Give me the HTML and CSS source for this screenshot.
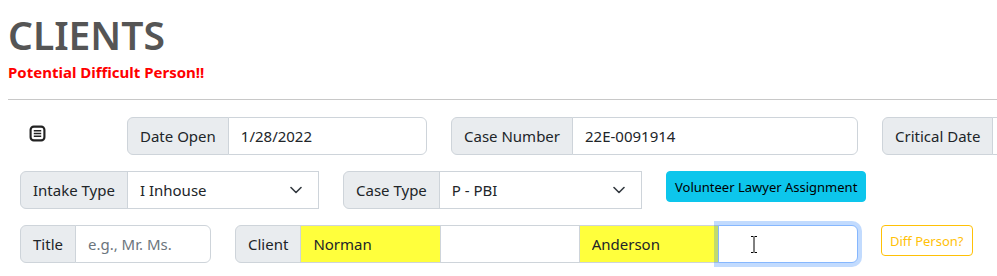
FILE: index.html
```html
<!DOCTYPE html>
<html lang="en">
<head>
    <meta charset="UTF-8">
    <meta name="viewport" content="width=device-width, initial-scale=1.0">
    <title>Clients</title>
    <link rel="stylesheet" href="styles.css">
</head>
<body>
    <div class="page">
        <h1 class="page-title">CLIENTS</h1>
        <div class="difficult-flag">Potential Difficult Person!!</div>
        <hr class="divider">

        <div class="case-form">
            <div class="form-row">
                <div class="icon-cell">
                    <svg class="notes-icon" width="17" height="17" viewBox="0 0 16 16">
                        <rect x="1.5" y="1.5" width="13" height="13" rx="3" fill="none" stroke="#222" stroke-width="2"/>
                        <path d="M4.5 5.5h7M4.5 8h7M4.5 10.5h7" stroke="#222" stroke-width="1.4"/>
                    </svg>
                </div>
                <div class="input-group w-300">
                    <span class="addon">Date Open</span>
                    <input class="field" type="text" value="1/28/2022">
                </div>
                <div class="input-group w-407">
                    <span class="addon">Case Number</span>
                    <input class="field" type="text" value="22E-0091914">
                </div>
                <div class="input-group w-300">
                    <span class="addon">Critical Date</span>
                    <input class="field" type="text" value="">
                </div>
            </div>

            <div class="form-row">
                <div class="input-group w-299">
                    <span class="addon">Intake Type</span>
                    <div class="field select">
                        <span>I Inhouse</span>
                        <svg width="12" height="8" viewBox="0 0 12 8"><path d="M1 1.5l5 5 5-5" fill="none" stroke="#343a40" stroke-width="1.6" stroke-linecap="round" stroke-linejoin="round"/></svg>
                    </div>
                </div>
                <div class="input-group w-299">
                    <span class="addon">Case Type</span>
                    <div class="field select">
                        <span>P - PBI</span>
                        <svg width="12" height="8" viewBox="0 0 12 8"><path d="M1 1.5l5 5 5-5" fill="none" stroke="#343a40" stroke-width="1.6" stroke-linecap="round" stroke-linejoin="round"/></svg>
                    </div>
                </div>
                <button class="btn btn-info" type="button">Volunteer Lawyer Assignment</button>
            </div>

            <div class="form-row">
                <div class="input-group w-191">
                    <span class="addon">Title</span>
                    <input class="field" type="text" placeholder="e.g., Mr. Ms.">
                </div>
                <div class="input-group w-623">
                    <span class="addon">Client</span>
                    <input class="field flagged" type="text" value="Norman">
                    <input class="field" type="text" value="">
                    <input class="field flagged" type="text" value="Anderson">
                    <div class="field focused">
                        <svg class="ibeam" width="8" height="17" viewBox="0 0 8 17">
                            <path d="M1 0.5h2.5M4.5 0.5h2.5M4 1v15M1 16.5h2.5M4.5 16.5h2.5" stroke="#000" stroke-width="1"/>
                        </svg>
                    </div>
                </div>
                <button class="btn btn-outline-warning" type="button">Diff Person?</button>
            </div>
        </div>
    </div>
</body>
</html>
```

FILE: styles.css
```css
html, body {
    margin: 0;
    padding: 0;
    background-color: #fff;
    overflow: hidden;
}
body {
    font-family: "Noto Sans", "Open Sans", sans-serif;
    color: #212529;
}
.page {
    padding: 8px;
}
.page-title {
    margin: 0;
    font-size: 39px;
    line-height: 54px;
    font-weight: 600;
    color: #555;
}
.difficult-flag {
    margin-top: 0;
    font-size: 15px;
    line-height: 20px;
    font-weight: 700;
    color: #f00;
}
.divider {
    margin: 17px -8px 17px 0;
    border: 0;
    border-top: 1px solid #c8c8c8;
}
.case-form {
    padding-left: 12px;
}
.form-row {
    display: flex;
    align-items: flex-start;
    gap: 24px;
    margin-bottom: 16px;
    white-space: nowrap;
}
.icon-cell {
    flex: 0 0 83px;
    padding: 8px 0 0 9px;
    box-sizing: border-box;
    height: 38px;
}
.notes-icon {
    display: block;
}
.input-group {
    display: flex;
    flex: none;
    height: 38px;
}
.w-191 { width: 191px; }
.w-299 { width: 299px; }
.w-300 { width: 300px; }
.w-407 { width: 407px; }
.w-623 { width: 623px; }
.addon {
    display: flex;
    align-items: center;
    padding: 0 12px;
    font-size: 15px;
    background-color: #e9ecef;
    border: 1px solid #ced4da;
    border-radius: 6px 0 0 6px;
    color: #212529;
}
.field {
    flex: 1 1 0;
    min-width: 0;
    margin-left: -1px;
    padding: 0 12px;
    font-family: inherit;
    font-size: 15px;
    color: #212529;
    background-color: #fff;
    border: 1px solid #ced4da;
    border-radius: 0;
    outline: none;
    box-sizing: border-box;
    height: 38px;
}
.field:last-child {
    border-radius: 0 6px 6px 0;
}
.field::placeholder {
    color: #6c757d;
}
.select {
    display: flex;
    align-items: center;
    justify-content: space-between;
    border-radius: 0 !important;
    padding-right: 16px;
}
.flagged {
    background-color: #ffff3c;
}
.focused {
    position: relative;
    border-color: #86b7fe;
    box-shadow: 0 0 0 4px rgba(13, 110, 253, 0.25);
    z-index: 2;
}
.ibeam {
    position: absolute;
    left: 31px;
    top: 10px;
}
.btn {
    flex: none;
    height: 31px;
    padding: 0 8px;
    font-family: inherit;
    font-size: 13px;
    border-radius: 4px;
    cursor: pointer;
}
.btn-info {
    background-color: #0dc6ec;
    border: 1px solid #0dc6ec;
    color: #000;
}
.btn-outline-warning {
    background-color: #fff;
    border: 1px solid #ffc107;
    color: #ffc107;
    font-size: 13px;
    margin-left: -1px;
}
```
